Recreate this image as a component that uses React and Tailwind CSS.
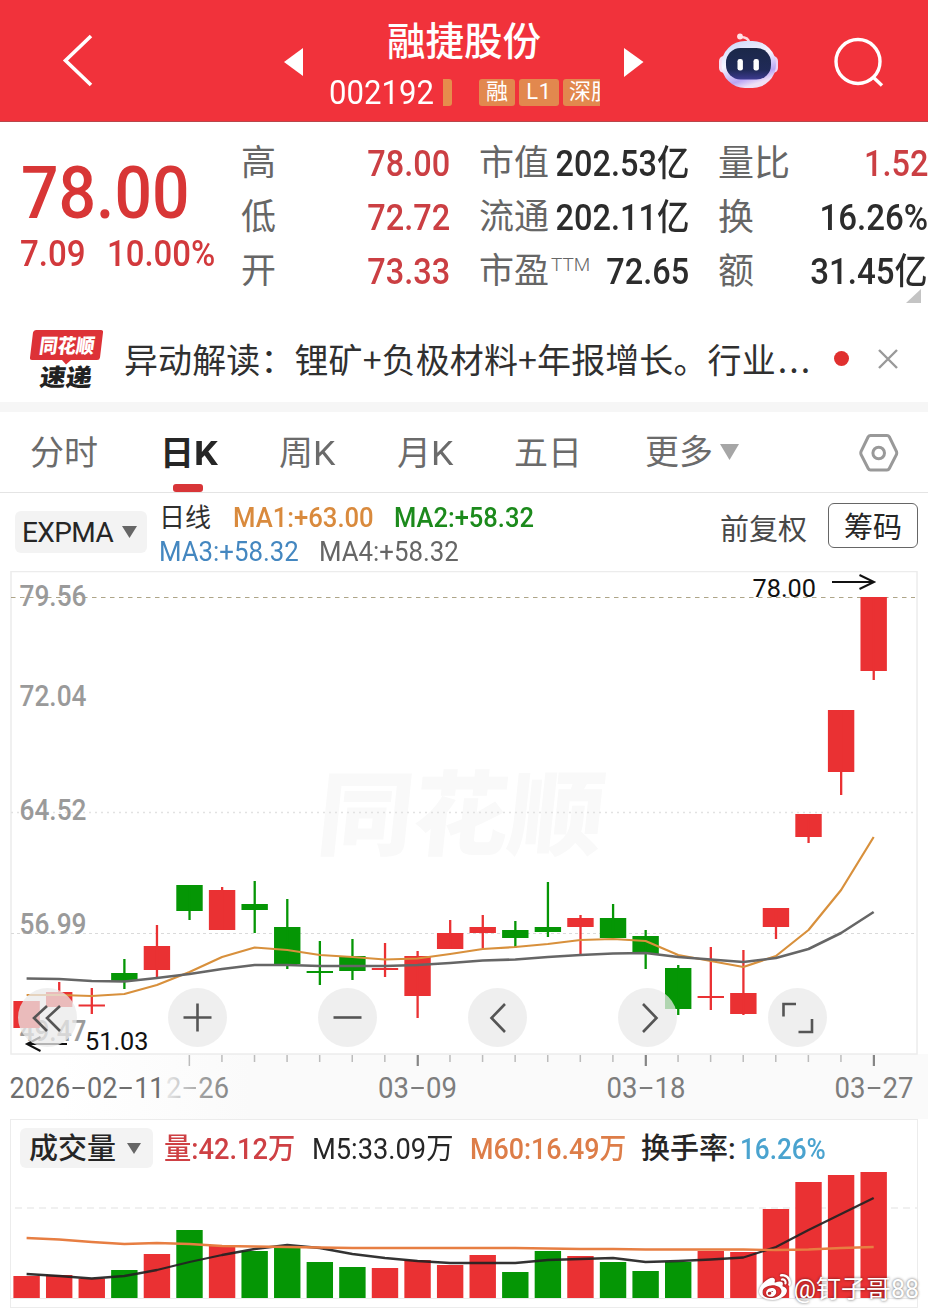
import React from "react";
import { FaWeibo } from "react-icons/fa";

const RED = "#ea3133";
const GREEN = "#059605";
const FONT = "Roboto, 'Noto Sans CJK SC', sans-serif";

const STEP = 32.58;
const cx = (i) => 26.6 + STEP * i;

// [rising, bodyTop, bodyBottom, wickTop, wickBottom]
const CANDLES = [
  [1, 1001, 1028, 1001, 1028],
  [1, 992, 1007, 982, 1007],
  [1, 1004.5, 1006.5, 988, 1014],
  [0, 973, 981, 959, 989],
  [1, 946, 970, 925, 978],
  [0, 885, 911, 885, 920],
  [1, 890, 930, 887, 930],
  [0, 904, 910, 881, 933],
  [0, 927, 964, 899, 969],
  [0, 971, 973, 941, 985],
  [0, 956, 971, 939, 980],
  [1, 968, 970, 943, 977],
  [1, 956, 996, 951, 1018],
  [1, 933, 949, 920, 949],
  [1, 927, 933, 915, 948],
  [0, 930, 938, 921, 948],
  [0, 927, 932, 882, 937],
  [1, 918, 927, 915, 954],
  [0, 918, 938, 904, 938],
  [0, 936, 954, 930, 969],
  [0, 968, 1009, 965, 1015],
  [1, 996, 998, 947, 1010],
  [1, 993, 1014, 950, 1015],
  [1, 908, 927, 908, 939],
  [1, 814, 837, 814, 843],
  [1, 710, 772, 710, 795],
  [1, 597, 671, 597, 680],
];
const MA_FAST = [995, 995, 996, 994, 985, 972, 957, 947.5, 950, 955, 957, 959.5, 958.5, 954, 949, 947, 944, 940, 939, 941, 955, 961, 967, 956, 930, 890, 837];
const MA_SLOW = [978.5, 979, 981, 981.5, 978, 974, 969, 965, 965, 966, 966, 966, 965, 963, 960.5, 959.5, 957, 955, 953.5, 953, 957, 959.5, 962, 958, 949, 933, 912];
const VOLUME = [1276, 1275, 1278.5, 1270, 1254, 1230, 1246, 1251, 1247, 1262, 1267, 1268, 1260, 1265, 1255, 1272, 1251, 1256, 1262, 1271, 1262, 1251, 1252, 1209, 1182, 1175, 1172];
const V_M5 = [1274, 1276, 1278.5, 1276, 1270, 1262, 1255, 1249, 1245, 1248, 1254, 1258, 1261, 1263, 1263, 1263, 1260, 1259, 1258, 1262, 1261, 1259.5, 1257.5, 1247, 1230, 1214, 1198];
const V_M60 = [1238, 1239.5, 1242, 1244, 1243, 1244, 1246, 1246.5, 1247, 1247.5, 1248, 1248, 1248, 1248, 1248, 1248, 1248.5, 1249, 1249, 1249.5, 1249.5, 1249.5, 1249.5, 1250, 1249.5, 1248, 1247];
const points = (ys) => ys.map((y, i) => `${cx(i)},${y}`).join(" ");

function Label({ x, y, w, size = 29, fill = "#9a9a9a", weight = 400, children }) {
  return (
    <text x={x} y={y} fontSize={size} fill={fill} fontWeight={weight} textLength={w} lengthAdjust="spacingAndGlyphs" fontFamily={FONT}>
      {children}
    </text>
  );
}

function DateLabel({ x, w, parts, fill = "#7d7d7d" }) {
  return (
    <text x={x} y={1098} fontSize={29} fill={fill} textLength={w} lengthAdjust="spacingAndGlyphs" fontFamily={FONT}>
      {parts.map((p, i) => (
        <React.Fragment key={i}>
          {i > 0 && <tspan dy={3.5} fontFamily="'DejaVu Sans'" fontWeight="200" fontSize={50}>-</tspan>}
          <tspan dy={i > 0 ? -3.5 : 0}>{p}</tspan>
        </React.Fragment>
      ))}
    </text>
  );
}

function Header() {
  return (
    <header className="flex h-[122px] border-b border-[#b9464b] bg-[#f1323b] text-white">
      <svg className="ml-[58px] mt-[30px] h-[60px] w-10 shrink-0" viewBox="58 30 40 60" fill="none" stroke="#fff" strokeWidth="3.6">
        <path d="M91 36 L65.5 60.5 L91 85" />
      </svg>
      <svg className="ml-[184px] mt-[46px] h-8 w-[24px] shrink-0" viewBox="282 46 24 32" fill="#fff">
        <path d="M284 62 L303 48 V76 Z" />
      </svg>
      <div className="ml-[20px] flex w-[276px] shrink-0 flex-col">
        <h1 className="mt-[18px] h-[46px] text-center text-[38.5px] font-medium leading-[48px]">融捷股份</h1>
        <div className="mt-[6px] flex h-[45px] items-center whitespace-nowrap">
          <div className="w-[117px] shrink-0 pl-[3px]">
            <span className="inline-block origin-left scale-x-[0.915] text-[34px] leading-[45px]">002192</span>
          </div>
          <div className="h-[27px] w-[9px] shrink-0 rounded-r-[3px] bg-[#e68d4c]" />
          <div className="ml-[27px] flex w-[121px] shrink-0 gap-[4px] overflow-hidden text-[22px] leading-[26px]">
            <span className="h-[27px] w-9 shrink-0 rounded-[3px] bg-[#e2884e] text-center">融</span>
            <span className="h-[27px] w-10 shrink-0 rounded-[3px] bg-[#e2884e] text-center tracking-wide">L1</span>
            <span className="h-[27px] w-[60px] shrink-0 rounded-[3px] bg-[#e2884e] pl-[6px]">深股通</span>
          </div>
        </div>
      </div>
      <svg className="ml-[20px] mt-[46px] h-8 w-6 shrink-0" viewBox="622 46 24 32" fill="#fff">
        <path d="M624 48 L643.5 62 L624 77 Z" />
      </svg>
      <svg className="ml-[70px] mt-[30px] h-[60px] w-[66px] shrink-0" viewBox="716 30 66 60">
        <defs>
          <linearGradient id="shell" x1="0" y1="0" x2="0.4" y2="1">
            <stop offset="0" stopColor="#c6d5fa" />
            <stop offset="0.5" stopColor="#f8f5ff" />
            <stop offset="0.85" stopColor="#b9a6f4" />
            <stop offset="1" stopColor="#efe0f6" />
          </linearGradient>
          <linearGradient id="visor" x1="0" y1="0" x2="0" y2="1">
            <stop offset="0" stopColor="#1b2849" />
            <stop offset="0.7" stopColor="#202a58" />
            <stop offset="1" stopColor="#3d3a90" />
          </linearGradient>
        </defs>
        <path d="M749 43 C749 38.500 745 37 740 37" fill="none" stroke="#ffd7dc" strokeWidth="2.400" />
        <circle cx="740" cy="36.500" r="2.900" fill="#ffe2e6" />
        <rect x="719" y="56" width="10" height="17" rx="5" fill="#f6dcf0" />
        <rect x="768" y="56" width="10" height="17" rx="5" fill="#efd3f3" />
        <rect x="721.500" y="41" width="54.500" height="47" rx="23.500" fill="url(#shell)" />
        <rect x="726" y="48" width="45" height="31.500" rx="14.500" fill="url(#visor)" />
        <rect x="737.500" y="59" width="5.400" height="11.500" rx="2.200" fill="#fff" />
        <rect x="753.500" y="59" width="5.400" height="11.500" rx="2.200" fill="#fff" />
      </svg>
      <svg className="ml-[48px] mt-[32px] h-[60px] w-[60px] shrink-0" viewBox="830 32 60 60" fill="none" stroke="#fff" strokeWidth="3.4">
        <circle cx="858" cy="61.500" r="22" />
        <path d="M873 77 L882 85.500" />
      </svg>
    </header>
  );
}

function Row({ label, sup, value, labelClass, valueClass }) {
  return (
    <div className="flex h-[54px] items-center justify-between whitespace-nowrap">
      <span className={"text-[#666] " + labelClass}>
        {label}
        {sup && <span className="relative -top-[12px] ml-[2px] text-[19px] font-light">{sup}</span>}
      </span>
      <span className={"-ml-10 origin-right text-[36.5px] font-medium " + valueClass}>{value}</span>
    </div>
  );
}

function Quotes() {
  const red = "text-[#cb3f43] scale-x-[0.89]";
  const dark = "text-[#2c2c2c] scale-x-[0.89]";
  const last = "text-[#2c2c2c] scale-x-[0.905]";
  return (
    <section className="flex h-[196px] pt-[15px]">
      <div className="w-[241px] shrink-0 pl-[21px] text-[#d2393c]">
        <div className="mt-[20px] h-[72px] origin-left scale-x-[0.905] text-[73px] font-medium leading-[72px] text-[#d83636]">78.00</div>
        <div className="mt-[3px] flex h-[44px] items-center text-[36px] font-medium leading-[44px]">
          <span className="-ml-px w-[87px] origin-left scale-x-[0.92]">7.09</span>
          <span className="w-[120px] origin-left scale-x-[0.915]">10.00%</span>
        </div>
      </div>
      <div className="w-[209px] shrink-0">
        <Row label="高" value="78.00" labelClass="text-[35px]" valueClass={red} />
        <Row label="低" value="72.72" labelClass="text-[35px]" valueClass={red} />
        <Row label="开" value="73.33" labelClass="text-[35px]" valueClass={red} />
      </div>
      <div className="ml-[29px] w-[210px] shrink-0">
        <Row label="市值" value="202.53亿" labelClass="text-[35px]" valueClass={dark} />
        <Row label="流通" value="202.11亿" labelClass="text-[35px]" valueClass={dark} />
        <Row label="市盈" sup="TTM" value="72.65" labelClass="text-[35px]" valueClass={dark} />
      </div>
      <div className="relative ml-[29px] w-[210px] shrink-0">
        <Row label="量比" value="1.52" labelClass="text-[36px]" valueClass={red} />
        <Row label="换" value="16.26%" labelClass="text-[36px]" valueClass={last} />
        <Row label="额" value="31.45亿" labelClass="text-[36px]" valueClass={last} />
        <svg className="absolute bottom-[15px] right-[7px] h-[14px] w-[15px]" viewBox="0 0 15 14">
          <path d="M15 0 V14 H0 Z" fill="#c4c4c4" />
        </svg>
      </div>
    </section>
  );
}

function News() {
  return (
    <section className="flex h-[84px] items-center pb-[3px]">
      <svg className="ml-[28px] h-[74px] w-[78px] shrink-0" viewBox="28 321 78 74" fontFamily="'Noto Sans CJK SC', sans-serif" fontWeight="900">
        <path d="M36 329 H101 Q103.500 329 103 331.500 L100 356.500 Q99.700 359 97 359 H71 L66 363.500 L62 359 H32 Q29.700 359 30 356.500 L33 331.500 Q33.500 329 36 329 Z" fill="#dd3237" />
        <text x="0" y="0" transform="translate(38.500 352) skewX(-8)" fontSize="20" textLength="55" lengthAdjust="spacingAndGlyphs" fill="#fff">同花顺</text>
        <text x="0" y="0" transform="translate(39 385) skewX(-7)" fontSize="24" textLength="52" lengthAdjust="spacingAndGlyphs" fill="#222">速递</text>
      </svg>
      <p className="ml-[18px] w-[691px] shrink-0 whitespace-nowrap font-['Noto_Sans_CJK_SC',sans-serif] text-[34px] leading-[48px] tracking-[0.1px] text-[#303030]">
        异动解读：锂矿+负极材料+年报增长。行业<span className="ml-[2px] tracking-[2px]">...</span>
      </p>
      <span className="ml-[19px] size-[15px] shrink-0 rounded-full bg-[#e0302f]" />
      <svg className="ml-[27px] size-[24px] shrink-0" viewBox="0 0 24 24" stroke="#999" strokeWidth="2.4">
        <path d="M3 3 L21 21 M21 3 L3 21" />
      </svg>
    </section>
  );
}

function Tabs() {
  const base = "shrink-0 whitespace-nowrap text-[34px] leading-[83px] text-[#6b6b6b] ";
  return (
    <nav className="flex h-[81px] border-b border-[#e4e4e4] pl-[30px]">
      <span className={base + "w-[130px]"}>分时</span>
      <div className="flex w-[119px] shrink-0 flex-col">
        <span className="h-[72px] text-[34px] font-bold leading-[83px] text-[#262626]">日<span className="inline-block origin-left scale-x-110">K</span></span>
        <span className="ml-[13px] h-2 w-[30px] rounded-[3px] bg-[#d83538]" />
      </div>
      <span className={base + "w-[118px]"}>周<span className="inline-block origin-left scale-x-105">K</span></span>
      <span className={base + "w-[117px]"}>月<span className="inline-block origin-left scale-x-105">K</span></span>
      <span className={base + "w-[131px]"}>五日</span>
      <span className={base + "flex w-[212px] items-center"}>
        更多
        <svg className="ml-[7px] h-4 w-[19px]" viewBox="0 0 19 16"><path d="M0 0 H19 L9.500 16 Z" fill="#a6a6a6" /></svg>
      </span>
      <svg className="mt-[19px] size-[44px] shrink-0" viewBox="857 431 44 44" fill="none" stroke="#999" strokeWidth="3">
        <path d="M870.500 435.500 H887 Q888.500 435.500 889.300 436.800 L896.500 451.500 Q897 453 896.500 454.500 L889.300 468.500 Q888.500 470 887 470 H870.500 Q869 470 868.200 468.500 L861 454.500 Q860.500 453 861 451.500 L868.200 436.800 Q869 435.500 870.500 435.500 Z" />
        <circle cx="878.700" cy="453" r="5.800" />
      </svg>
    </nav>
  );
}

function Indicators() {
  return (
    <section className="flex h-[78px] whitespace-nowrap pl-[15px]">
      <div className="mt-[18px] flex h-[42px] w-[132px] shrink-0 items-center rounded-[6px] bg-[#f3f3f3] pl-[7px] text-[#262626]">
        <span className="w-[100px] text-[28px] leading-[42px] tracking-[-0.6px]"><span className="relative top-px">EXPMA</span></span>
        <svg className="-mt-px h-3 w-[15px]" viewBox="0 0 15 12"><path d="M0 0 H15 L7.500 12 Z" fill="#666" /></svg>
      </div>
      <div className="ml-[12px] mt-[8px] w-[561px] shrink-0 text-[27px] leading-[34px]">
        <div className="flex h-[34px]">
          <span className="w-[74px] text-[26px] text-[#303030]">日线</span>
          <span className="w-[161px] origin-left scale-x-[0.95] font-medium text-[#d98a3d]">MA1:+63.00</span>
          <span className="origin-left scale-x-[0.945] font-medium text-[#1c8a1c]">MA2:+58.32</span>
        </div>
        <div className="flex h-[34px]">
          <span className="w-[160px] origin-left scale-x-[0.955] text-[#4487c0]">MA3:+58.32</span>
          <span className="origin-left scale-x-[0.955] text-[#666]">MA4:+58.32</span>
        </div>
      </div>
      <span className="mt-[12px] w-[108px] shrink-0 text-[29px] leading-[50px] text-[#484848]">前复权</span>
      <span className="mt-[10px] h-[45px] w-[90px] shrink-0 rounded-[6px] border border-[#666] text-center text-[29px] leading-[48px] text-[#262626]">筹码</span>
    </section>
  );
}

function Candles() {
  return (
    <section className="relative h-[548px]">
      <svg className="block h-[548px] w-[928px]" viewBox="0 571 928 548">
        <defs>
          <linearGradient id="fade" x1="0" x2="1">
            <stop offset="0" stopColor="#fff" />
            <stop offset="0.22" stopColor="#fafafa" />
            <stop offset="1" stopColor="#fafafa" />
          </linearGradient>
          <linearGradient id="soft" gradientUnits="userSpaceOnUse" x1="165" x2="228" y1="0" y2="0">
            <stop offset="0" stopColor="#888" stopOpacity="0.15" />
            <stop offset="0.6" stopColor="#888" stopOpacity="0.8" />
            <stop offset="1" stopColor="#888" />
          </linearGradient>
        </defs>
        <rect x="60" y="1054" width="868" height="65" fill="url(#fade)" />
        <rect x="11" y="571.500" width="906" height="482.500" fill="#fff" stroke="#ececec" strokeWidth="1.500" />
        <text transform="translate(315 848) skewX(-6)" fontSize="92" fontWeight="900" fill="#f9f9f9" textLength="286" lengthAdjust="spacingAndGlyphs" fontFamily="'Noto Sans CJK SC', sans-serif">同花顺</text>
        <path d="M11 597.500 H915" stroke="#aea588" strokeWidth="1.200" strokeDasharray="4.500 4.500" />
        <path d="M11 812.500 H917" stroke="#e2e2e2" strokeWidth="1.400" strokeDasharray="2 4" />
        <path d="M11 933.500 H917" stroke="#dadada" strokeWidth="1.200" strokeDasharray="3 3" />
        <Label x={19.5} y={606} w={67} weight={500}>79.56</Label>
        <Label x={19.5} y={706} w={67} weight={500}>72.04</Label>
        <Label x={19.5} y={820} w={67} weight={500}>64.52</Label>
        <Label x={19.5} y={933.500} w={67} weight={500}>56.99</Label>
        <Label x={19.5} y={1040.500} w={67} weight={500}>49.47</Label>
        {CANDLES.map(([up, t, b, wt, wb], i) => (
          <g key={i} fill={up ? RED : GREEN}>
            <rect x={cx(i) - 13.2} y={t} width="26.400" height={b - t} />
            <rect x={cx(i) - 1.1} y={wt} width="2.300" height={wb - wt} />
          </g>
        ))}
        <polyline points={points(MA_FAST)} fill="none" stroke="#d8903c" strokeWidth="2.200" strokeLinejoin="round" />
        <polyline points={points(MA_SLOW)} fill="none" stroke="#666" strokeWidth="2.600" strokeLinejoin="round" />
        <Label x={752.500} y={597} w={63.500} size={26.500} fill="#111">78.00</Label>
        <path d="M832 582 H873 M859.500 575 L874 582 L859.500 589" fill="none" stroke="#111" strokeWidth="2" />
        <Label x={85} y={1050} w={63.500} size={26.500} fill="#111">51.03</Label>
        <path d="M67 1044 H28 M40.500 1037 L27 1044 L40.500 1051" fill="none" stroke="#111" strokeWidth="2" />
        {CANDLES.map((_, i) =>
          i < 5 ? null : (
            <rect key={i} x={cx(i) - 0.9} y="1055" width={i % 7 === 5 && i > 5 ? 2.2 : 1.5} height={i % 7 === 5 ? 11 : 7} fill={i % 7 === 5 && i > 5 ? "#858585" : "#bcbcbc"} />
          )
        )}
        <DateLabel x={9.5} w={155} parts={["2026", "02", "11"]} fill="#6e6e6e" />
        <DateLabel x={166} w={63} parts={["2", "26"]} fill="url(#soft)" />
        <DateLabel x={378} w={79} parts={["03", "09"]} />
        <DateLabel x={606.500} w={79} parts={["03", "18"]} />
        <DateLabel x={834.500} w={79} parts={["03", "27"]} />
      </svg>
      <div className="absolute left-[18px] top-[417px] flex gap-[91px]">
        {[
          "M46 18 L33 30 L46 43 M59 18 L46 30 L59 43",
          "M15.500 29.500 H43.500 M29.500 15.500 V43.500",
          "M15.500 29.500 H43.500",
          "M37 16 L23.500 30 L37 44",
          "M25 16 L38.500 30 L25 44",
          "M28 16 H15.500 V28.500 M44 31 V44 H30.500",
        ].map((d, i) => (
          <button key={d} className="flex size-[59px] items-center justify-center rounded-full bg-[#eaeaea]/75">
            <svg className="size-[59px]" viewBox={i === 0 ? "17 0 59 59" : "0 0 59 59"} fill="none" stroke="#555" strokeWidth="2.6">
              <path d={d} />
            </svg>
          </button>
        ))}
      </div>
    </section>
  );
}

function Volume() {
  return (
    <section className="relative mx-[10px] h-[189px] w-[908px] border border-[#ececec] text-[29px]">
      <svg className="block h-[187px] w-[906px]" viewBox="11 1120 906 187">
        <path d="M15 1208 H917" stroke="#ebebeb" strokeWidth="1.300" strokeDasharray="7 5" />
        <path d="M11 1298.500 H917" stroke="#ececec" />
        {VOLUME.map((t, i) => (
          <rect key={i} x={cx(i) - 13.2} y={t} width="26.400" height={1298 - t} fill={CANDLES[i][0] ? RED : GREEN} />
        ))}
        <polyline points={points(V_M5)} fill="none" stroke="#222" strokeOpacity="0.92" strokeWidth="2.300" strokeLinejoin="round" />
        <polyline points={points(V_M60)} fill="none" stroke="#e77e42" strokeWidth="2.300" strokeLinejoin="round" />
      </svg>
      <div className="absolute left-[9px] top-[8px] flex h-[40px] items-center whitespace-nowrap leading-[42px] text-[#262626]">
        <div className="flex h-[40px] w-[133px] items-center rounded-[6px] bg-[#f3f3f3] pl-[9px]">
          <span className="w-[98px] pt-px font-medium">成交量</span>
          <svg className="h-[11px] w-[14px]" viewBox="0 0 14 11"><path d="M0 0 H14 L7 11 Z" fill="#666" /></svg>
        </div>
        <span className="ml-[11px] w-[148px] origin-left scale-x-[0.94] pt-px font-medium text-[#ce4044]">量:42.12万</span>
        <span className="w-[158px] origin-left scale-x-[0.94] pt-px">M5:33.09万</span>
        <span className="w-[171px] origin-left scale-x-[0.925] pt-px font-medium text-[#dd7d48]">M60:16.49万</span>
        <span className="w-[99px] pt-px font-medium">换手率:</span>
        <span className="origin-left scale-x-[0.9] pt-px font-medium text-[#4aa3cf]">16.26%</span>
      </div>
      <div className="absolute bottom-0 right-[-2px] flex h-[34px] items-center whitespace-nowrap text-[25px] text-white [text-shadow:0_0_3px_rgba(0,0,0,0.65)]">
        <FaWeibo className="mb-1 mr-[2px] size-[32px] [filter:drop-shadow(0_0_1px_rgba(0,0,0,0.5))]" />
        @钉子哥88
      </div>
    </section>
  );
}

export default function App() {
  return (
    <main lang="zh-CN" className="h-[1310px] w-[928px] overflow-hidden bg-white font-[Roboto,'Noto_Sans_CJK_SC',sans-serif]">
      <Header />
      <Quotes />
      <News />
      <div className="h-[10px] bg-[#f6f6f6]" />
      <Tabs />
      <Indicators />
      <Candles />
      <Volume />
    </main>
  );
}
